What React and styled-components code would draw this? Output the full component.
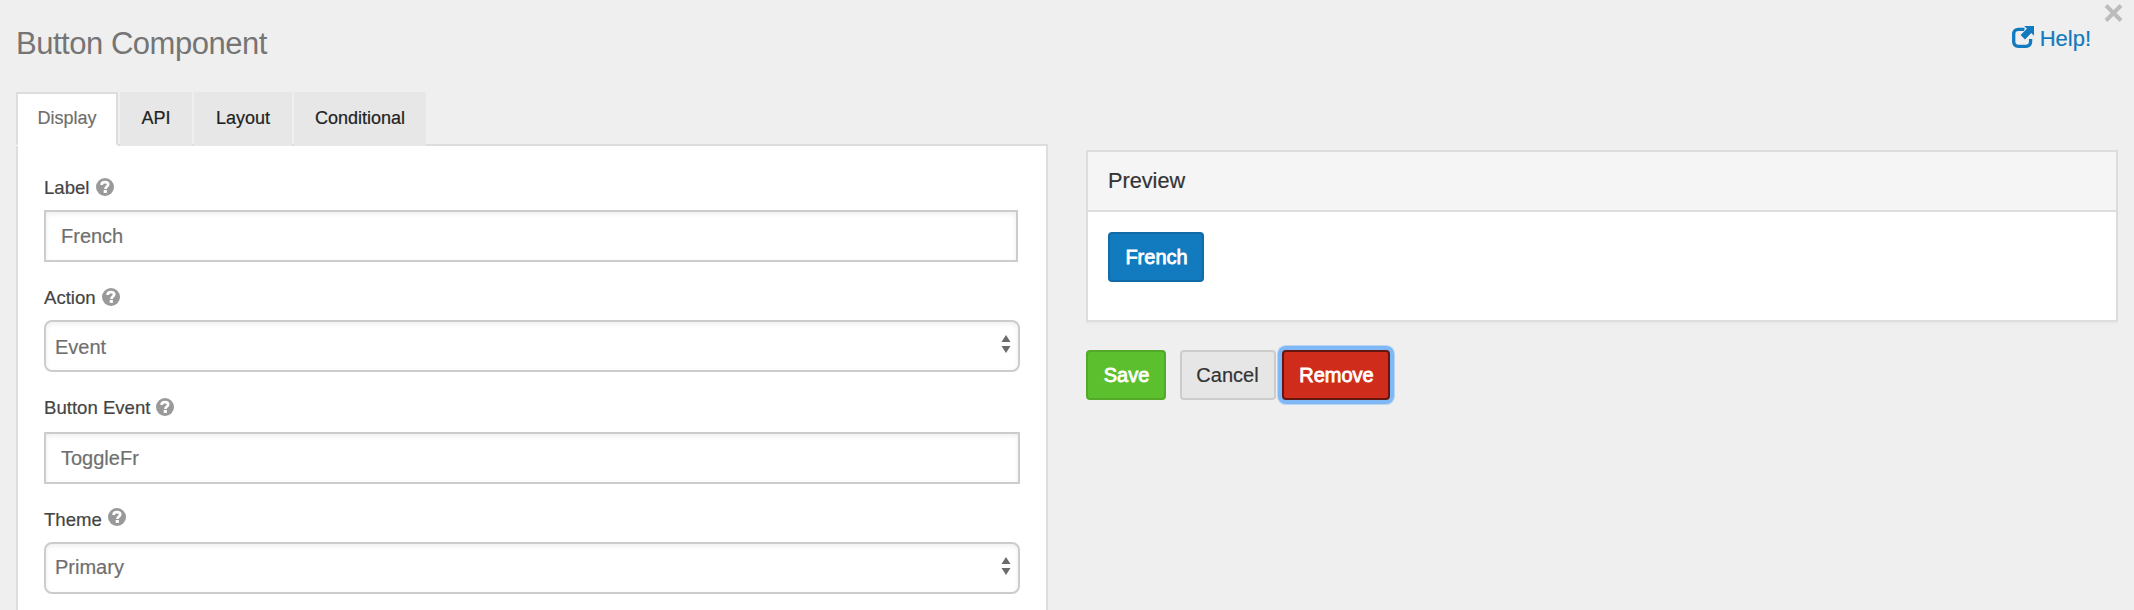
import React from 'react';
import styled, { createGlobalStyle } from 'styled-components';

const GlobalStyle = createGlobalStyle`
  *, *::before, *::after { box-sizing: border-box; }
  html, body { margin: 0; background: #efefef; overflow: hidden; }
  body, button, input { font-family: "Liberation Sans", Arial, sans-serif; }
`;

const Dialog = styled.main`
  position: relative;
  height: 610px;
  overflow: hidden;
  padding: 0 16px;
  background: #efefef;
  -webkit-text-stroke: 0.2px currentColor;
`;

const Header = styled.header`
  display: flex;
  justify-content: space-between;
  height: 92px;
  padding: 24px 27px 0 0;
`;

const Title = styled.h1`
  margin: 0;
  font-size: 31px;
  line-height: 40px;
  font-weight: 400;
  letter-spacing: -0.48px;
  color: #757575;
  -webkit-text-stroke: 0;
`;

const HelpLink = styled.a`
  display: flex;
  align-items: flex-start;
  gap: 6px;
  height: 28px;
  margin-top: 2px;
  font-size: 22px;
  line-height: 26px;
  color: #127abe;
  svg { display: block; }
`;

const CloseButton = styled.button`
  position: absolute;
  top: 4px;
  right: 11px;
  display: block;
  padding: 0;
  border: 0;
  background: none;
  line-height: 0;
`;

const Columns = styled.div`
  display: grid;
  grid-template-columns: 1032px 1032px;
  column-gap: 38px;
`;

const Tabs = styled.nav`
  display: flex;
  gap: 2px;
  height: 54px;
  margin-bottom: -2px;
  position: relative;
`;

const Tab = styled.button`
  width: ${(p) => p.$width}px;
  height: 54px;
  padding: 0 0 2px;
  border: 2px solid ${(p) => (p.$active ? '#dddddd' : '#e7e7e7')};
  border-bottom-color: ${(p) => (p.$active ? '#ffffff' : '#e7e7e7')};
  background: ${(p) => (p.$active ? '#ffffff' : '#e7e7e7')};
  font-size: 18px;
  color: ${(p) => (p.$active ? '#6f6f6f' : '#222222')};
  -webkit-text-stroke: 0.2px currentColor;
`;

const FormPanel = styled.section`
  height: 500px;
  padding: 32px 26px 0;
  border: 2px solid #dddddd;
  background: #ffffff;
`;

const Field = styled.div`
  display: flex;
  flex-direction: column;
  height: ${(p) => p.$height || 110}px;
`;

const FieldLabel = styled.label`
  display: flex;
  flex: none;
  gap: 6px;
  height: ${(p) => 32 + (p.$lift || 0)}px;
  margin-top: ${(p) => -(p.$lift || 0)}px;
  font-size: 18.6px;
  line-height: 20px;
  color: #444444;
  svg { display: block; }
`;

const LabelText = styled.span`
  padding-top: ${(p) => p.$offset || 0}px;
`;

const TextInput = styled.input`
  display: block;
  width: ${(p) => p.$width || 976}px;
  height: 52px;
  padding: 1px 15px 0;
  border: 2px solid #cccccc;
  border-radius: 0;
  outline: 0;
  background: #ffffff;
  box-shadow: inset 0 2px 5px rgba(0, 0, 0, 0.07);
  font-size: 20px;
  color: #6f6f6f;
  -webkit-text-stroke: 0.2px currentColor;
`;

const SelectBox = styled.div`
  display: flex;
  justify-content: space-between;
  width: 976px;
  height: 52px;
  padding: ${(p) => p.$textTop || 14}px 7px 0 9px;
  border: 2px solid #cccccc;
  border-radius: 8px;
  background: #ffffff;
  box-shadow: inset 0 2px 5px rgba(0, 0, 0, 0.07);
  font-size: 20px;
  line-height: 23px;
  color: #6f6f6f;
  svg { display: block; margin-top: ${(p) => 13 - (p.$textTop || 14)}px; }
`;

const PreviewColumn = styled.div`
  padding-top: 58px;
`;

const PreviewCard = styled.section`
  height: 172px;
  border: 2px solid #dddddd;
  background: #ffffff;
  box-shadow: 0 2px 2px rgba(0, 0, 0, 0.025);
`;

const PreviewHeader = styled.h2`
  height: 60px;
  margin: 0;
  padding: 14px 20px 0;
  border-bottom: 2px solid #dddddd;
  background: #f5f5f5;
  font-size: 21.7px;
  line-height: 30px;
  font-weight: 400;
  color: #333333;
`;

const PreviewBody = styled.div`
  padding: 20px;
`;

const buttonThemes = {
  primary: { fill: '#127abe', edge: '#106ba7', text: '#ffffff' },
  success: { fill: '#5cbf2d', edge: '#52aa28', text: '#ffffff' },
  neutral: { fill: '#e6e6e6', edge: '#cccccc', text: '#333333' },
  danger: { fill: '#d02c1c', edge: '#651610', text: '#ffffff' },
};

const Button = styled.button`
  display: block;
  width: ${(p) => p.$width}px;
  height: 50px;
  padding: 1px ${(p) => (p.$theme === 'neutral' ? 1 : 0)}px 0 ${(p) => (p.$theme === 'neutral' ? 0 : 1)}px;
  border: 2px solid ${(p) => buttonThemes[p.$theme].edge};
  border-radius: 4px;
  background: ${(p) => buttonThemes[p.$theme].fill};
  box-shadow: ${(p) => (p.$focused ? '0 0 0 4px #80b8f6, 0 0 0 5px #b8d4f3' : 'none')};
  font-size: 20px;
  color: ${(p) => buttonThemes[p.$theme].text};
  -webkit-text-stroke: ${(p) => (p.$theme === 'neutral' ? 0.2 : 0.8)}px currentColor;
`;

const Actions = styled.div`
  display: flex;
  padding-top: 28px;
  ${Button} + ${Button} { margin-left: 14px; }
  ${Button} + ${Button} + ${Button} { margin-left: 6px; }
`;

const QuestionIcon = () => (
  <svg width="18" height="18" viewBox="0 0 18 18" aria-hidden="true">
    <circle cx="9" cy="9" r="9" fill="#999999" />
    <path d="M5.6 7C5.6 4.900 7 4.200 9 4.200c2 0 3.200.8 3.200 2.300 0 2-2.800 2-2.800 4.500" fill="none" stroke="#fff" strokeWidth="2.700" />
    <rect x="7.700" y="12" width="3.200" height="2.900" fill="#fff" />
  </svg>
);

const SortArrows = () => (
  <svg width="10" height="18" viewBox="0 0 10 18" aria-hidden="true">
    <path d="M5 0 9.500 7h-9zM5 18 .5 11h9z" fill="#6b6b6b" />
  </svg>
);

const ShareIcon = () => (
  <svg width="22" height="22" viewBox="0 0 22 22" aria-hidden="true">
    <path d="M12.500 3.400H6.500Q1.700 3.400 1.700 8.200v7.300Q1.700 20.300 6.500 20.300h7.300q4.800 0 4.800-4.800V13" fill="none" stroke="currentColor" strokeWidth="3.300" />
    <path d="M12.200 0H22v9.800l-2.700-2.700-6.300 6.300-4.400-4.400 6.300-6.300z" fill="currentColor" stroke="#efefef" strokeWidth="1.200" paintOrder="stroke" />
  </svg>
);

export default function App() {
  return (
    <Dialog>
      <GlobalStyle />
      <CloseButton aria-label="Close">
        <svg width="19" height="18" viewBox="0 0 19 18">
          <path d="M2 1.500l15 15M17 1.500l-15 15" stroke="#bcbcbc" strokeWidth="4" />
        </svg>
      </CloseButton>
      <Header>
        <Title>Button Component</Title>
        <HelpLink><ShareIcon />Help!</HelpLink>
      </Header>
      <Columns>
        <div>
          <Tabs>
            <Tab $width={102} $active>Display</Tab>
            <Tab $width={72}>API</Tab>
            <Tab $width={98}>Layout</Tab>
            <Tab $width={132}>Conditional</Tab>
          </Tabs>
          <FormPanel>
            <Field>
              <FieldLabel><LabelText>Label</LabelText><QuestionIcon /></FieldLabel>
              <TextInput $width={974} defaultValue="French" />
            </Field>
            <Field $height={112}>
              <FieldLabel><LabelText>Action</LabelText><QuestionIcon /></FieldLabel>
              <SelectBox>Event<SortArrows /></SelectBox>
            </Field>
            <Field>
              <FieldLabel $lift={2}><LabelText>Button Event</LabelText><QuestionIcon /></FieldLabel>
              <TextInput defaultValue="ToggleFr" />
            </Field>
            <Field>
              <FieldLabel $lift={2}><LabelText $offset={2}>Theme</LabelText><QuestionIcon /></FieldLabel>
              <SelectBox $textTop={12}>Primary<SortArrows /></SelectBox>
            </Field>
          </FormPanel>
        </div>
        <PreviewColumn>
          <PreviewCard>
            <PreviewHeader>Preview</PreviewHeader>
            <PreviewBody><Button $theme="primary" $width={96}>French</Button></PreviewBody>
          </PreviewCard>
          <Actions>
            <Button $theme="success" $width={80}>Save</Button>
            <Button $theme="neutral" $width={96}>Cancel</Button>
            <Button $theme="danger" $width={108} $focused>Remove</Button>
          </Actions>
        </PreviewColumn>
      </Columns>
    </Dialog>
  );
}
